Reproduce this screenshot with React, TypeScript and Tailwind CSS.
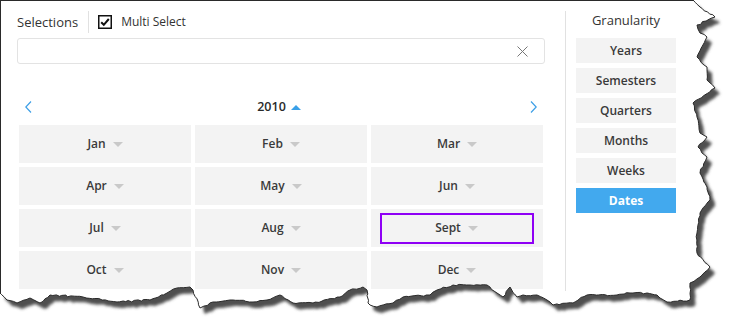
import React from "react";

const months = [
  "Jan", "Feb", "Mar",
  "Apr", "May", "Jun",
  "Jul", "Aug", "Sept",
  "Oct", "Nov", "Dec",
];

const levels = ["Years", "Semesters", "Quarters", "Months", "Weeks", "Dates"];

// rough outline of the torn paper (right + bottom edges)
const tornPts: [number, number][] = [
  [693, 0], [700, 7], [715, 17], [697, 25], [700, 33], [707, 37], [697, 57],
  [707, 67], [707, 80], [715, 88], [693, 103], [697, 117], [700, 133],
  [707, 137], [698, 147], [707, 157], [700, 173], [707, 187], [710, 200],
  [700, 213], [697, 233], [697, 253], [710, 267], [700, 277], [690, 283],
  [690, 300], [667, 302], [660, 298], [657, 295], [647, 293], [630, 293],
  [617, 295], [587, 295], [573, 303], [553, 305], [547, 300], [537, 295],
  [523, 295], [517, 297], [510, 287], [503, 297], [497, 293], [487, 285],
  [470, 285], [453, 285], [437, 290], [430, 295], [403, 297], [393, 303],
  [377, 307], [370, 305], [368, 303], [367, 290], [363, 287], [350, 290],
  [340, 297], [313, 303], [293, 303], [280, 295], [267, 300], [253, 302],
  [233, 300], [213, 302], [200, 308], [193, 290], [190, 287], [177, 288],
  [167, 293], [150, 300], [117, 302], [83, 297], [50, 295], [40, 303],
  [30, 298], [17, 303], [7, 300], [0, 293],
];

function jagged(pts: [number, number][]) {
  let seed = 7;
  const rnd = () => {
    seed = (seed * 9301 + 49297) % 233280;
    return seed / 233280 - 0.5;
  };
  const out: string[] = [];
  for (let i = 0; i < pts.length; i++) {
    const [x1, y1] = pts[i];
    out.push(`${x1},${y1}`);
    if (i === pts.length - 1) break;
    const [x2, y2] = pts[i + 1];
    const steps = Math.floor(Math.hypot(x2 - x1, y2 - y1) / 3);
    for (let s = 1; s < steps; s++) {
      const t = s / steps;
      const x = x1 + (x2 - x1) * t + rnd() * 1.6;
      const y = y1 + (y2 - y1) * t + rnd() * 1.6;
      out.push(`${x.toFixed(1)},${y.toFixed(1)}`);
    }
  }
  return out;
}

const edge = jagged(tornPts);
const edgeLine = "M" + edge.join(" L");
const paper = "M0,0 L" + edge.join(" L") + " Z";

function TornEdge() {
  return (
    <svg className="absolute inset-0 pointer-events-none" width="738" height="333">
      <defs>
        <clipPath id="outside">
          <path d={"M0,0 H738 V333 H0 Z " + paper} clipRule="evenodd" />
        </clipPath>
        <filter id="soft" x="-10%" y="-10%" width="120%" height="120%">
          <feGaussianBlur stdDeviation="1.6" />
        </filter>
      </defs>
      <path d={"M0,0 H738 V333 H0 Z " + paper} fill="#fff" fillRule="evenodd" />
      <g clipPath="url(#outside)">
        <path d={paper} transform="translate(5,6)" fill="#505050" filter="url(#soft)" />
      </g>
      <path d={edgeLine} fill="none" stroke="#2a2a2a" strokeWidth="1" />
    </svg>
  );
}

function Caret({ up, className }: { up?: boolean; className: string }) {
  return (
    <svg width="10" height="5" viewBox="0 0 10 5" className={className}>
      <path d={up ? "M0 5 L5 0 L10 5 Z" : "M0 0 L10 0 L5 5 Z"} fill="currentColor" />
    </svg>
  );
}

export default function App() {
  return (
    <div className="relative w-[738px] h-[333px] bg-white overflow-hidden text-[#333] font-['Segoe_UI','Open_Sans',sans-serif]">
      <div className="flex h-[333px] w-[700px] border-l border-t border-[#2a2a2a]">
        {/* left: selections + calendar */}
        <div className="w-[544px] pl-4 pt-[9px]">
          <div className="flex items-center h-6">
            <span className="text-[13px] leading-none">Selections</span>
            <div className="mx-[10px] w-px h-[22px] bg-[#e1e1e1]" />
            <svg width="14" height="14" viewBox="0 0 14 14" className="-ml-[1px]">
              <rect x="0.75" y="0.75" width="12.5" height="12.5" fill="#fff" stroke="#111" strokeWidth="1.5" />
              <path d="M3.2 7.2 L5.8 9.8 L10.8 4" fill="none" stroke="#111" strokeWidth="2" />
            </svg>
            <span className="ml-[9px] text-[12px] leading-none">Multi Select</span>
          </div>
          <div className="mt-1 h-[26px] w-[528px] rounded-[3px] border border-[#e3e3e3] flex items-center justify-end pr-4">
            <svg width="11" height="11" viewBox="0 0 11 11">
              <path d="M0.5 0.5 L10.5 10.5 M10.5 0.5 L0.5 10.5" stroke="#777" strokeWidth="1" />
            </svg>
          </div>
          <div className="mt-[34px] h-[18px] w-[528px] flex items-center justify-between px-[8px]">
            <svg width="7" height="12" viewBox="0 0 7 12">
              <path d="M6 0.5 L0.8 6 L6 11.5" fill="none" stroke="#3d9fe6" strokeWidth="1.2" />
            </svg>
            <div className="flex items-center gap-[5px] mr-[4px]">
              <span className="text-[12.5px] font-semibold leading-none text-[#2a2a2a]">2010</span>
              <Caret up className="text-[#3aa0e8]" />
            </div>
            <svg width="7" height="12" viewBox="0 0 7 12">
              <path d="M1 0.5 L6.2 6 L1 11.5" fill="none" stroke="#3d9fe6" strokeWidth="1.2" />
            </svg>
          </div>
          <div className="mt-[9px] ml-[2px] grid grid-cols-3 gap-1 w-[524px]">
            {months.map((m) => (
              <div key={m} className="h-[38px] bg-[#f3f3f3] flex items-center justify-center">
                {m === "Sept" ? (
                  <div className="w-[154px] h-[31px] border-2 border-[#8f00f5] flex items-center justify-center gap-[7px] -ml-[1px]">
                    <span className="text-[12px] font-semibold text-[#3a3a3a]">{m}</span>
                    <Caret className="text-[#c9c9c9]" />
                  </div>
                ) : (
                  <div className="flex items-center gap-[7px]">
                    <span className="text-[12px] font-semibold text-[#3a3a3a]">{m}</span>
                    <Caret className="text-[#c9c9c9]" />
                  </div>
                )}
              </div>
            ))}
          </div>
        </div>

        {/* right: granularity */}
        <div className="ml-[20px] mt-[10px] h-[280px] border-l border-[#e1e1e1] pl-[10px]">
          <div className="w-[100px] h-5 flex items-center justify-center text-[13px]">Granularity</div>
          <div className="mt-[7px] flex flex-col gap-[5px]">
            {levels.map((l) => (
              <div
                key={l}
                className={
                  l === "Dates"
                    ? "w-[100px] h-[25px] bg-[#42a9ee] text-white font-bold text-[12px] flex items-center justify-center"
                    : "w-[100px] h-[25px] bg-[#f3f3f3] font-semibold text-[#3a3a3a] text-[12px] flex items-center justify-center"
                }
              >
                {l}
              </div>
            ))}
          </div>
        </div>
      </div>
      <TornEdge />
    </div>
  );
}
